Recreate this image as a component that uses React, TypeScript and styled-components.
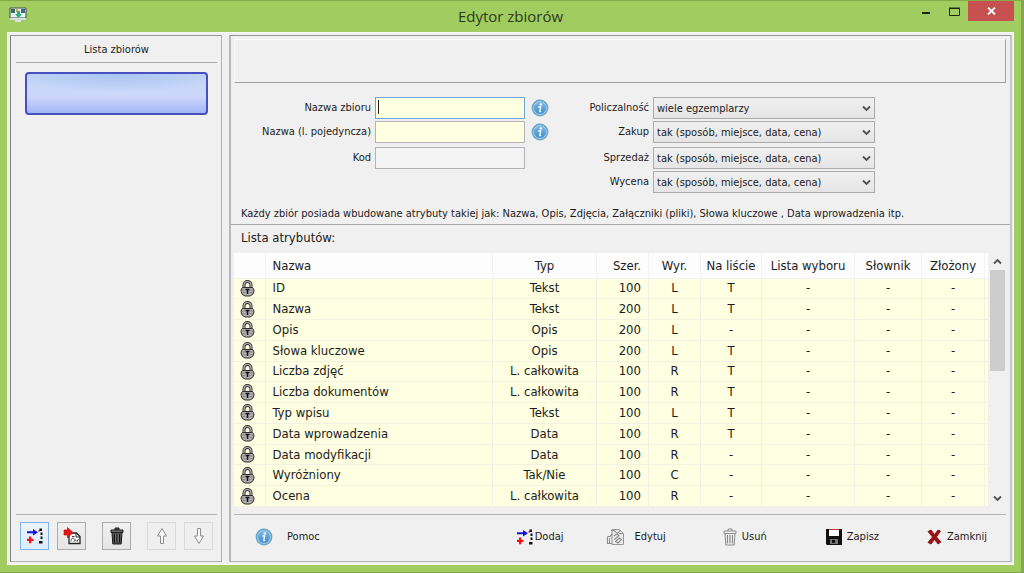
import React from "react";
import styled, { createGlobalStyle, css } from "styled-components";

const uiFont = `"DejaVu Sans Condensed", "DejaVu Sans", sans-serif`;

const GlobalStyle = createGlobalStyle`
  * { box-sizing: border-box; }
  body { margin: 0; background: #a1cd60; }
  button, input, select { font-family: inherit; font-size: inherit; color: inherit; }
`;

const Window = styled.div`
  display: flex;
  flex-direction: column;
  min-height: 100vh;
  padding: 0 7px;
  border-top: 1px solid #84ab48;
  border-right: 3px solid #84a54d;
  border-bottom: 1px solid #84a54d;
  background: #a1cd60;
  font-family: ${uiFont};
  font-size: 11px;
  color: #1c1c1c;
`;

const TitleBar = styled.header`
  display: grid;
  grid-template-columns: 1fr auto 1fr;
  height: 31px;
`;

const AppIcon = styled.svg`
  width: 18px;
  height: 16px;
  margin: 6px 0 0 2px;
`;

const Title = styled.h1`
  margin: 0;
  font: 400 15px/30px "Open Sans", sans-serif;
  color: #2c3a1a;
`;

const WindowControls = styled.div`
  display: flex;
  justify-content: flex-end;
  align-items: flex-start;
`;

const ControlButton = styled.button<{ $close?: boolean }>`
  display: flex;
  align-items: center;
  justify-content: center;
  width: ${(p) => (p.$close ? 46 : 28)}px;
  height: 20px;
  padding: 0;
  border: 0;
  background: ${(p) => (p.$close ? "#c75050" : "transparent")};
`;

const Client = styled.main`
  flex: 1;
  display: flex;
  gap: 7px;
  margin-bottom: 7px;
  padding: 2px 1px 2px 2px;
  background: #f0f0f0;
  border: 1px solid #f8f8f8;
`;

const Panel = styled.section<{ $side?: boolean }>`
  display: flex;
  flex-direction: column;
  border: 1px solid #b0b0b4;
  border-top-color: #98989c;
  background: #f0f0f0;
  ${(p) =>
    p.$side
      ? css`
          flex: 0 0 212px;
          padding: 0 4px 0 5px;
          border-left-color: #808084;
        `
      : css`
          flex: 1;
          min-width: 0;
          padding: 3px 4px 0 3px;
          border-left: 2px solid #b8b8bc;
          border-right: 2px solid #c4c4cc;
        `}
`;

const PanelTitle = styled.h2`
  margin: 0;
  font-size: 11px;
  font-weight: 400;
  line-height: 28px;
  height: 27px;
  text-align: center;
  border-bottom: 1px solid #a8a8a8;
`;

const SetList = styled.div`
  flex: 1;
  padding: 9px;
`;

const SetItem = styled.button`
  display: block;
  width: 100%;
  height: 43px;
  border: 2px solid #4850c0;
  border-radius: 4px;
  background: radial-gradient(ellipse 60% 45% at 50% 0, #a9c4f6, transparent),
    linear-gradient(#c3d5f6, #cbd8f9 55%, #ccd5fc 60%, #a4b5f8);
`;

const SideTools = styled.div`
  display: flex;
  gap: 8px;
  height: 47px;
  padding: 7px 4px 0;
  border-top: 1px solid #b4b4b4;
`;

const ToolButton = styled.button<{ $state?: "active" | "off"; $apart?: boolean }>`
  display: flex;
  align-items: center;
  justify-content: center;
  width: 29px;
  height: 28px;
  padding: 0;
  margin-left: ${(p) => (p.$apart ? 8 : 0)}px;
  border: 1px solid
    ${(p) => (p.$state === "active" ? "#7eb4ea" : p.$state === "off" ? "#dadada" : "#acacac")};
  background: ${(p) =>
    p.$state === "active"
      ? "linear-gradient(#ecf4fc, #dcecfc)"
      : p.$state === "off"
        ? "#efefef"
        : "linear-gradient(#f0f0f0, #e5e5e5)"};
`;

const Icon = styled.svg`
  display: block;
  flex: none;
`;

const Banner = styled.div`
  height: 44px;
  border: 1px solid #fafafa;
  border-right-color: #a0a0a0;
  border-bottom-color: #a0a0a0;
`;

const Form = styled.form`
  display: flex;
  padding: 14px 0;
`;

const FieldList = styled.div<{ $label: number }>`
  display: grid;
  grid-template-columns: ${(p) => p.$label}px auto auto;
  grid-template-rows: 22px 22px 24px 22px;
  column-gap: 4px;
  row-gap: 2px;
  align-content: start;
  align-items: end;
`;

const Label = styled.label`
  line-height: 22px;
  text-align: right;
  white-space: nowrap;
`;

const TextInput = styled.input<{ $kind: "focused" | "required" | "plain" }>`
  width: 150px;
  height: 22px;
  padding: 0 4px;
  outline: 0;
  border: 1px solid ${(p) => (p.$kind === "focused" ? "#6fa5dc" : "#b2b2b8")};
  background: ${(p) => (p.$kind === "plain" ? "#f3f3f3" : "#ffffe1")};
  ${(p) =>
    p.$kind === "focused" &&
    css`
      background-image: linear-gradient(#202020, #202020);
      background-size: 1px 14px;
      background-position: 2px 2px;
      background-repeat: no-repeat;
    `}
`;

const InfoButton = styled.button`
  display: flex;
  align-items: center;
  width: 22px;
  height: 22px;
  padding: 0 2px;
  border: 0;
  background: none;
`;

const SelectBox = styled.div`
  position: relative;
  width: 222px;
  height: 22px;
`;

const Select = styled.select`
  appearance: none;
  display: block;
  width: 100%;
  height: 100%;
  padding: 0 20px 0 3px;
  border: 1px solid #acacac;
  border-radius: 0;
  background: linear-gradient(#f0f0f0, #e5e5e5);
`;

const SelectArrow = styled.span`
  position: absolute;
  right: 4px;
  top: 8px;
  pointer-events: none;
`;

const Note = styled.p`
  margin: 0 -4px 0 -3px;
  padding: 0 10px;
  line-height: 14px;
  height: 18px;
  white-space: nowrap;
  border-bottom: 1px solid #a8a8a8;
`;

const ListTitle = styled.h3`
  margin: 0;
  padding-left: 7px;
  font-size: 13px;
  font-weight: 400;
  line-height: 26px;
  height: 28px;
`;

const TableArea = styled.div`
  flex: 1;
  display: flex;
  min-height: 254px;
`;

const Table = styled.table`
  flex: 1;
  height: 254px;
  border-collapse: collapse;
  table-layout: fixed;
  font-size: 13px;
`;

const Cell = styled.td<{ $align?: "left" | "right"; $width?: number; $end?: boolean }>`
  width: ${(p) => (p.$width ? `${p.$width}px` : "auto")};
  padding: 0 ${(p) => (p.$end ? 0 : 7)}px;
  border-right: 1px solid #f0f0e6;
  border-bottom: 1px solid #f2f2e2;
  background: #ffffe1;
  font-weight: 400;
  line-height: 18px;
  text-align: ${(p) => p.$align ?? "center"};
  white-space: nowrap;
`;

const LockCell = styled(Cell)`
  padding: 0 6px;
`;

const HeadCell = styled(Cell).attrs({ as: "th" })`
  height: 25px;
  padding: 2px ${(p) => (p.$align ? 7 : 0)}px 0;
  background: #fdfdfd;
  border-color: #f3f3f3;
`;

const ScrollBar = styled.div`
  display: flex;
  flex-direction: column;
  width: 17px;
  background: #f0f0f0;
`;

const ScrollArrow = styled.button`
  display: flex;
  justify-content: center;
  align-items: center;
  height: 17px;
  padding: 0;
  border: 0;
  background: none;
`;

const ScrollTrack = styled.div`
  flex: 1;
  padding: 0 1px;
`;

const ScrollThumb = styled.div`
  height: 46%;
  background: #cdcdcd;
`;

const Footer = styled.footer`
  display: flex;
  align-items: center;
  height: 47px;
  margin-top: 7px;
  padding: 0 19px 3px 21px;
  border-top: 1px solid #b4b4b4;
`;

const ActionButton = styled.button<{ $gap?: number; $before?: number; $grow?: boolean }>`
  display: flex;
  align-items: center;
  gap: ${(p) => p.$gap ?? 5}px;
  margin-left: ${(p) => p.$before ?? 0}px;
  margin-right: ${(p) => (p.$grow ? "auto" : "0")};
  padding: 0;
  border: 0;
  background: none;
  white-space: nowrap;
`;

const InfoIcon = () => (
  <Icon width="18" height="18" viewBox="0 0 18 18">
    <defs>
      <linearGradient id="info" x1="0" y1="0" x2="0" y2="1">
        <stop offset="0" stopColor="#7db8e2" />
        <stop offset="1" stopColor="#3f8fd0" />
      </linearGradient>
    </defs>
    <circle cx="9" cy="9" r="8.4" fill="#6aa2c8" />
    <circle cx="9" cy="9" r="7" fill="#9fcbea" />
    <circle cx="9" cy="9" r="6" fill="url(#info)" />
    <circle cx="9.8" cy="5.5" r="1.2" fill="#fff" />
    <path d="M7.4 8h2.2l-.8 4.6h1.4" fill="none" stroke="#fff" strokeWidth="1.3" />
  </Icon>
);

const AddIcon = () => (
  <Icon width="18" height="18" viewBox="0 0 18 18">
    <path d="M1 4.200h6V2l5 3.200-5 3.200V6.200H1z" fill="#1414d8" />
    <path d="M3 9.500h2.300v2.200h2.200V14H5.300v2.200H3V14H1v-2.300h2z" fill="#f01414" />
    <path d="M12.500 4.500l1.500-1.500" stroke="#e03050" strokeWidth="1.500" />
    <path d="M13.500 1.500H16V4h-2.500zM14.500 5.500h2v2.500h-2zM14.500 9.500h2v2.500h-2zM13 14h3.500v2.500H13z" fill="#141414" />
  </Icon>
);

const PageIcon = () => (
  <Icon width="18" height="18" viewBox="0 0 18 18">
    <path d="M6 6h7.500L17 9.500v7H6z" fill="#fff" stroke="#222" strokeWidth="1.300" />
    <path d="M13 6v4h4" fill="none" stroke="#222" />
    <path d="M8 14.500c0-3 1.500-4 3-3s1 3-.5 3M12 12.500l2 2 1.500-2.500M9 9.500h2.500" fill="none" stroke="#444" />
    <path d="M1 3h3.500V.5l5.500 5-5.500 5.500V8H1z" fill="#e81414" stroke="#a01010" strokeWidth=".6" />
  </Icon>
);

const TrashIcon = ({ off }: { off?: boolean }) => (
  <Icon width="14" height="18" viewBox="0 0 14 18">
    <path
      d="M1 3h12v2.500H1zM5 3V1h4v2M2 5.500h10l-.8 11.500H2.800z"
      fill={off ? "#f0f0f0" : "#555"}
      stroke={off ? "#8c8c8c" : "#1c1c1c"}
    />
    <path d="M4.500 7v8.500M7 7v8.500M9.500 7v8.500" stroke={off ? "#8c8c8c" : "#111"} strokeWidth="1.200" />
    {!off && <path d="M5.700 7v8M8.200 7v8M2 4.200h10" stroke="#8a8a8a" strokeWidth=".7" />}
  </Icon>
);

const ArrowIcon = ({ down }: { down?: boolean }) => (
  <Icon width="12" height="18" viewBox="0 0 12 18">
    <path
      d="M6 1.500l4.500 7.500H7.500v7.500h-3V9h-3z"
      transform={down ? "rotate(180 6 9)" : undefined}
      fill="#fafafa"
      stroke="#8e8e8e"
    />
  </Icon>
);

const EditIcon = () => (
  <Icon width="19" height="18" viewBox="0 0 19 18">
    <path d="M6 1.500h7l4.500 4v11H6z" fill="#ececec" stroke="#959595" />
    <path
      d="M1.500 8.500H4L6.500 6M1.500 8.500v7H6M3.500 10v5M5 2.500h3l3.500 3 3-3.500M8 8l3-2 2 1.500-4.500 4M13 5.500h4M9.500 13.500l4-3.500 2 1.500-3.500 3.500z"
      fill="none"
      stroke="#8c8c8c"
      strokeWidth="1.100"
    />
  </Icon>
);

const SaveIcon = () => (
  <Icon width="16" height="16" viewBox="0 0 16 16">
    <path d="M0 0h16v16H1l-1-1z" fill="#111" />
    <path d="M3 1h10v6H3z" fill="#fff" />
    <path d="M3 .5h10" stroke="#d03030" />
    <path d="M4 10h8v5H4z" fill="#777" />
    <path d="M6 11h3v3H6z" fill="#111" />
  </Icon>
);

const CloseIcon = () => (
  <Icon width="15" height="16" viewBox="0 0 15 16">
    <path
      d="M1 2.500L4 1l3.500 4.500L11 1l2.500 1-4 6 4.500 5-3 2-3.500-4.500L4 15l-3-1.500L5.500 8z"
      fill="#a01010"
      stroke="#7c0c0c"
      strokeWidth=".8"
    />
  </Icon>
);

const LockIcon = () => (
  <Icon width="15" height="17" viewBox="0 0 15 17">
    <path d="M4 8V5a3.500 3.500 0 0 1 7 0v3" fill="none" stroke="#303030" strokeWidth="3" />
    <path d="M4 8V5a3.500 3.500 0 0 1 7 0v3" fill="none" stroke="#b8b8b8" strokeWidth="1.200" />
    <path
      d="M2.500 7.500h10q1.500 1 1.500 3.500-.5 4-4 5h-5q-3.500-1-4-5 0-2.500 1.500-3.500z"
      fill="#b0b0b0"
      stroke="#303030"
    />
    <path d="M2 10h3M10 10h3M2.500 12.500h3M9.500 12.500h3" stroke="#808080" strokeWidth=".8" />
    <path d="M5.500 9.500h4M7.500 9v5" stroke="#111" strokeWidth="1.600" />
  </Icon>
);

const Chevron = ({ up }: { up?: boolean }) => (
  <Icon width="9" height="7" viewBox="0 0 9 7">
    <path
      d={up ? "M1 5.500l3.500-3.500L8 5.500" : "M1 1.500L4.500 5 8 1.500"}
      fill="none"
      stroke="#505050"
      strokeWidth="1.800"
    />
  </Icon>
);

const textFields = [
  { id: "name", label: "Nazwa zbioru", kind: "focused", info: true },
  { id: "single", label: "Nazwa (l. pojedyncza)", kind: "required", info: true },
  { id: "code", label: "Kod", kind: "plain", info: false },
] as const;

const detail = "tak (sposób, miejsce, data, cena)";
const selectFields = [
  { id: "count", label: "Policzalność", value: "wiele egzemplarzy" },
  { id: "buy", label: "Zakup", value: detail },
  { id: "sell", label: "Sprzedaż", value: detail },
  { id: "price", label: "Wycena", value: detail },
];

const columns: { title: string; width?: number; align?: "left" | "right" }[] = [
  { title: "Nazwa", align: "left" },
  { title: "Typ", width: 104 },
  { title: "Szer.", width: 52, align: "right" },
  { title: "Wyr.", width: 52 },
  { title: "Na liście", width: 61 },
  { title: "Lista wyboru", width: 93 },
  { title: "Słownik", width: 67 },
  { title: "Złożony", width: 63 },
];

const rows = [
  ["ID", "Tekst", "100", "L", "T"],
  ["Nazwa", "Tekst", "200", "L", "T"],
  ["Opis", "Opis", "200", "L", "-"],
  ["Słowa kluczowe", "Opis", "200", "L", "T"],
  ["Liczba zdjęć", "L. całkowita", "100", "R", "T"],
  ["Liczba dokumentów", "L. całkowita", "100", "R", "T"],
  ["Typ wpisu", "Tekst", "100", "L", "T"],
  ["Data wprowadzenia", "Data", "100", "R", "T"],
  ["Data modyfikacji", "Data", "100", "R", "-"],
  ["Wyróżniony", "Tak/Nie", "100", "C", "-"],
  ["Ocena", "L. całkowita", "100", "R", "-"],
];

export default function App() {
  return (
    <Window>
      <GlobalStyle />
      <TitleBar>
        <AppIcon viewBox="0 0 18 16">
          <path d="M1 1h16v10H1z" fill="#e8f2ee" stroke="#38504c" />
          <path d="M2 2h4v4H2z" fill="#3c6c58" />
          <path d="M7 2h2v3H7z" fill="#c8a850" />
          <path d="M12 2h4v4h-4z" fill="#486484" />
          <path d="M8 4h3v3h2l-3.500 4L6 7h2z" fill="#28b078" />
          <path d="M1 11h16v2H1zM6 13h6v2H6z" fill="#d8e0dc" />
        </AppIcon>
        <Title>Edytor zbiorów</Title>
        <WindowControls>
          <ControlButton aria-label="Minimalizuj">
            <Icon width="8" height="8" viewBox="0 0 8 8">
              <path d="M0 5h8v2H0z" fill="#1c280c" />
            </Icon>
          </ControlButton>
          <ControlButton aria-label="Maksymalizuj">
            <Icon width="11" height="9" viewBox="0 0 11 9">
              <path d="M.5 1.500h10v7H.5zM0 1h11" fill="none" stroke="#1c280c" />
            </Icon>
          </ControlButton>
          <ControlButton $close aria-label="Zamknij okno">
            <Icon width="9" height="8" viewBox="0 0 9 8">
              <path d="M1 .5l7 7M8 .5l-7 7" stroke="#fff" strokeWidth="1.800" />
            </Icon>
          </ControlButton>
        </WindowControls>
      </TitleBar>

      <Client>
        <Panel $side>
          <PanelTitle>Lista zbiorów</PanelTitle>
          <SetList>
            <SetItem aria-label="Nowy zbiór" />
          </SetList>
          <SideTools>
            <ToolButton $state="active" aria-label="Dodaj zbiór"><AddIcon /></ToolButton>
            <ToolButton aria-label="Edytuj zbiór"><PageIcon /></ToolButton>
            <ToolButton $apart aria-label="Usuń zbiór"><TrashIcon /></ToolButton>
            <ToolButton $apart $state="off" aria-label="W górę"><ArrowIcon /></ToolButton>
            <ToolButton $state="off" aria-label="W dół"><ArrowIcon down /></ToolButton>
          </SideTools>
        </Panel>

        <Panel>
          <Banner />
          <Form>
            <FieldList $label={137}>
              {textFields.map((f) => (
                <React.Fragment key={f.id}>
                  <Label htmlFor={f.id}>{f.label}</Label>
                  <TextInput id={f.id} $kind={f.kind} />
                  {f.info ? (
                    <InfoButton type="button" aria-label={`Pomoc: ${f.label}`}>
                      <InfoIcon />
                    </InfoButton>
                  ) : (
                    <span />
                  )}
                </React.Fragment>
              ))}
            </FieldList>
            <FieldList $label={98}>
              {selectFields.map((f) => (
                <React.Fragment key={f.id}>
                  <Label htmlFor={f.id}>{f.label}</Label>
                  <SelectBox>
                    <Select id={f.id} defaultValue={f.value}>
                      <option>{f.value}</option>
                    </Select>
                    <SelectArrow><Chevron /></SelectArrow>
                  </SelectBox>
                  <span />
                </React.Fragment>
              ))}
            </FieldList>
          </Form>
          <Note>
            Każdy zbiór posiada wbudowane atrybuty takiej jak: Nazwa, Opis, Zdjęcia, Załączniki
            (pliki), Słowa kluczowe , Data wprowadzenia itp.
          </Note>
          <ListTitle>Lista atrybutów:</ListTitle>
          <TableArea>
            <Table>
              <thead>
                <tr>
                  <HeadCell $width={31} />
                  {columns.map((c) => (
                    <HeadCell key={c.title} $align={c.align} $width={c.width}>
                      {c.title}
                    </HeadCell>
                  ))}
                  <HeadCell $width={4} />
                </tr>
              </thead>
              <tbody>
                {rows.map((r) => (
                  <tr key={r[0]}>
                    <LockCell><LockIcon /></LockCell>
                    {[...r, "-", "-", "-"].map((v, i) => (
                      <Cell key={i} $align={columns[i].align}>{v}</Cell>
                    ))}
                    <Cell $end />
                  </tr>
                ))}
              </tbody>
            </Table>
            <ScrollBar>
              <ScrollArrow aria-label="Przewiń w górę"><Chevron up /></ScrollArrow>
              <ScrollTrack><ScrollThumb /></ScrollTrack>
              <ScrollArrow aria-label="Przewiń w dół"><Chevron /></ScrollArrow>
            </ScrollBar>
          </TableArea>
          <Footer>
            <ActionButton $gap={14} $grow><InfoIcon />Pomoc</ActionButton>
            <ActionButton $gap={1}><AddIcon />Dodaj</ActionButton>
            <ActionButton $gap={10} $before={42}><EditIcon />Edytuj</ActionButton>
            <ActionButton $before={57}><TrashIcon off />Usuń</ActionButton>
            <ActionButton $before={59}><SaveIcon />Zapisz</ActionButton>
            <ActionButton $before={48}><CloseIcon />Zamknij</ActionButton>
          </Footer>
        </Panel>
      </Client>
    </Window>
  );
}
